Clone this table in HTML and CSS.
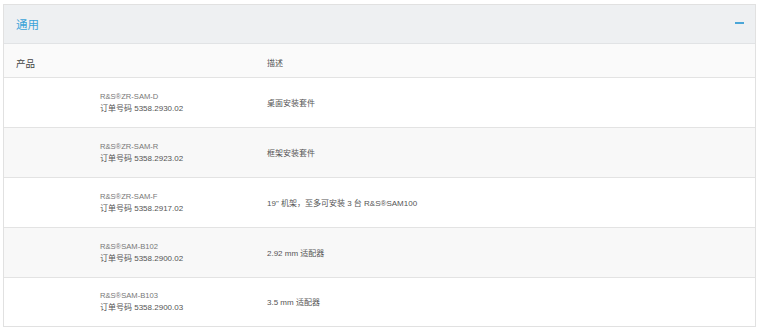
FILE: index.html
```html
<!DOCTYPE html>
<html lang="zh">
<head>
<meta charset="utf-8">
<link rel="stylesheet" href="styles.css">
</head>
<body>
<section class="panel">
  <header class="panel-head">
    <span class="panel-title">通用</span>
    <span class="toggle" aria-label="collapse"></span>
  </header>
  <div class="table">
    <div class="row head">
      <div class="c1">产品</div>
      <div class="c2">描述</div>
    </div>
    <div class="row">
      <div class="c1 prod"><span class="name">R&amp;S®ZR-SAM-D</span><span class="order">订单号码 5358.2930.02</span></div>
      <div class="c2">桌面安装套件</div>
    </div>
    <div class="row alt">
      <div class="c1 prod"><span class="name">R&amp;S®ZR-SAM-R</span><span class="order">订单号码 5358.2923.02</span></div>
      <div class="c2">框架安装套件</div>
    </div>
    <div class="row">
      <div class="c1 prod"><span class="name">R&amp;S®ZR-SAM-F</span><span class="order">订单号码 5358.2917.02</span></div>
      <div class="c2">19" 机架，至多可安装 3 台 R&amp;S®SAM100</div>
    </div>
    <div class="row alt">
      <div class="c1 prod"><span class="name">R&amp;S®SAM-B102</span><span class="order">订单号码 5358.2900.02</span></div>
      <div class="c2">2.92 mm 适配器</div>
    </div>
    <div class="row last">
      <div class="c1 prod"><span class="name">R&amp;S®SAM-B103</span><span class="order">订单号码 5358.2900.03</span></div>
      <div class="c2">3.5 mm 适配器</div>
    </div>
  </div>
</section>
</body>
</html>
```
FILE: styles.css
```css
html, body {
  margin: 0;
  padding: 0;
  background: #fff;
}
body {
  font-family: "Liberation Sans", "Noto Sans CJK SC", sans-serif;
  color: #555;
}
.panel {
  margin: 4px 0 0 3px;
  width: 753px;
  box-sizing: border-box;
  border: 1px solid #e1e1e1;
}
.panel-head {
  height: 38px;
  background: #eef0f2;
  border-bottom: 1px solid #e1e3e5;
  display: flex;
  align-items: center;
  justify-content: space-between;
  padding: 0 10px 0 12px;
}
.panel-title {
  color: #3aa3d9;
  font-size: 11.5px;
  font-family: "Noto Sans CJK SC", sans-serif;
  padding-bottom: 1px;
}
.toggle {
  width: 9px;
  height: 1.5px;
  background: #4aa6d8;
  margin: 0 1px 2px 0;
}
.row {
  display: grid;
  grid-template-columns: 263px 1fr;
  align-items: center;
  height: 49px;
  border-bottom: 1px solid #e3e3e3;
  background: #fff;
}
.row.last {
  border-bottom: none;
  height: 48px;
}
.row.alt {
  background: #f8f8f8;
}
.row.head {
  height: 33px;
  background: #fafafa;
  font-family: "Noto Sans CJK SC", sans-serif;
  font-size: 9.5px;
  color: #444;
}
.row.head .c1,
.row.head .c2 {
  padding-top: 4px;
}
.row.head .c1 {
  padding-left: 12px;
}
.c2 {
  font-size: 8px;
  color: #555;
  padding-bottom: 1px;
}
.prod {
  display: flex;
  flex-direction: column;
  padding-left: 96px;
}
.name {
  font-size: 7.6px;
  color: #777;
  line-height: 12px;
}
.order {
  font-size: 8px;
  color: #555;
  line-height: 12px;
}
```
